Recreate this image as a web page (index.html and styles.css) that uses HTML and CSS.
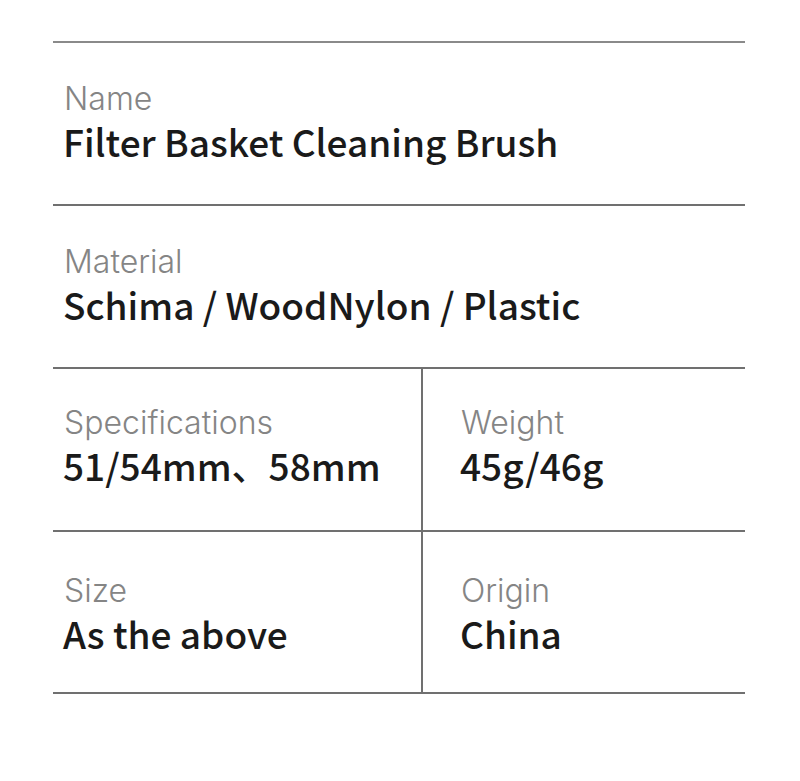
FILE: index.html
```html
<!DOCTYPE html>
<html>
<head>
<meta charset="utf-8">
<link rel="stylesheet" href="styles.css">
</head>
<body>
<div class="table">
  <div class="cell wide">
    <div class="label">Name</div>
    <div class="value">Filter Basket Cleaning Brush</div>
  </div>
  <div class="cell wide">
    <div class="label">Material</div>
    <div class="value">Schima / WoodNylon / Plastic</div>
  </div>
  <div class="cell left upper">
    <div class="label">Specifications</div>
    <div class="value">51/54mm、58mm</div>
  </div>
  <div class="cell right upper">
    <div class="label">Weight</div>
    <div class="value">45g/46g</div>
  </div>
  <div class="cell left lower">
    <div class="label">Size</div>
    <div class="value">As the above</div>
  </div>
  <div class="cell right lower">
    <div class="label">Origin</div>
    <div class="value">China</div>
  </div>
</div>
</body>
</html>
```

FILE: styles.css
```css
html, body {
  margin: 0;
  padding: 0;
  background: #fff;
}
body {
  width: 800px;
  height: 781px;
  padding-top: 41px;
  box-sizing: border-box;
}
.table {
  margin-left: 53px;
  width: 692px;
  display: grid;
  grid-template-columns: 370px 322px;
  border-top: 2px solid #8a8a8a;
}
.cell {
  height: 163px;
  box-sizing: border-box;
  border-bottom: 2px solid #707070;
  padding: 36px 0 0 11px;
}
.wide {
  grid-column: 1 / 3;
}
.left {
  border-right: 2px solid #707070;
}
.right {
  padding-left: 38px;
}
.upper {
  padding-top: 34px;
}
.lower {
  padding-top: 39px;
  height: 162px;
}
.label {
  font-family: "Inter", "Noto Sans", sans-serif;
  font-weight: 300;
  font-size: 32px;
  line-height: 39px;
  color: #858585;
}
.value {
  font-family: "Noto Sans CJK SC", "Noto Sans", sans-serif;
  font-weight: 500;
  font-size: 37px;
  line-height: 46px;
  color: #1a1a1a;
  margin-left: -1px;
}
```
